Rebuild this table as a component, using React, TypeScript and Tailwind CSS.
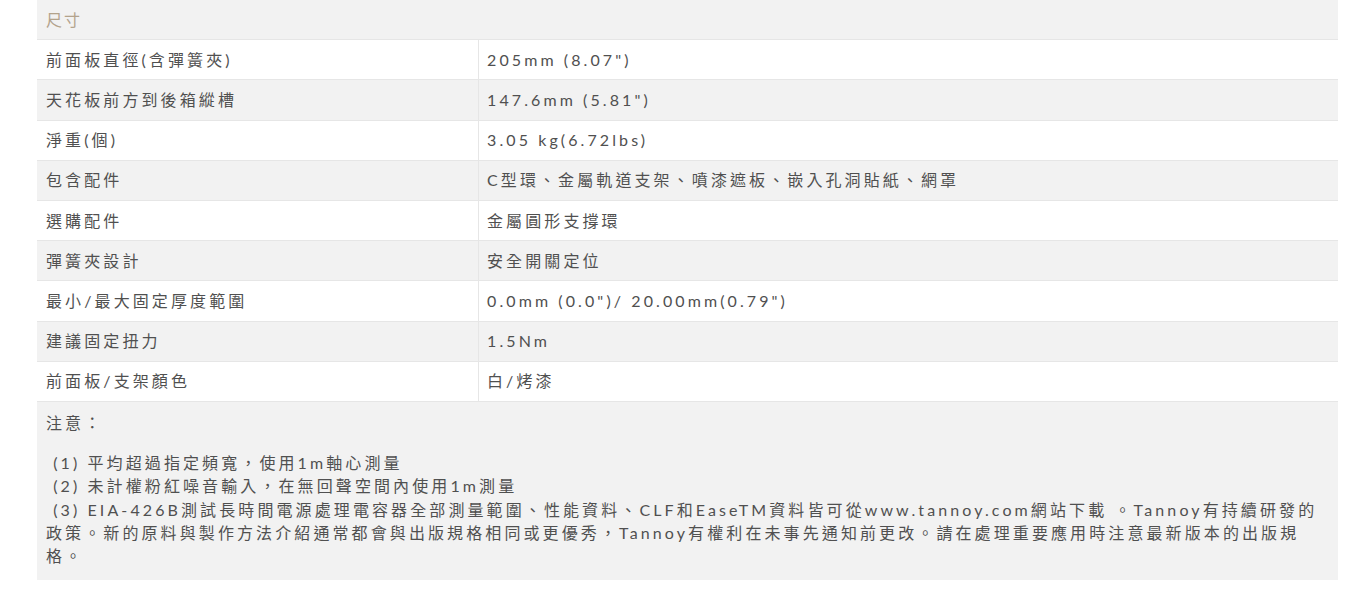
type Row = { label: string; value: string };

const ROWS: Row[] = [
  { label: "前面板直徑(含彈簧夾)", value: "205mm (8.07\")" },
  { label: "天花板前方到後箱縱槽", value: "147.6mm (5.81\")" },
  { label: "淨重(個)", value: "3.05 kg(6.72lbs)" },
  { label: "包含配件", value: "C型環、金屬軌道支架、噴漆遮板、嵌入孔洞貼紙、網罩" },
  { label: "選購配件", value: "金屬圓形支撐環" },
  { label: "彈簧夾設計", value: "安全開關定位" },
  { label: "最小/最大固定厚度範圍", value: "0.0mm (0.0\")/ 20.00mm(0.79\")" },
  { label: "建議固定扭力", value: "1.5Nm" },
  { label: "前面板/支架顏色", value: "白/烤漆" },
];

// 規格表：交錯底色的兩欄列，最後一列是整寬的注意事項
export default function App() {
  return (
    <div className="min-h-screen bg-white pl-[37px] pr-[24px] font-['Lato','Noto_Sans_CJK_TC',sans-serif] text-[#505050]">
      <div className="w-full">
        <div className="h-[40.2px] flex items-center px-[9px] bg-[#f2f2f2] border-b border-[#e6e6e6] text-[16px] tracking-[2px] text-[#b3a38c]">
          尺寸
        </div>
        {ROWS.map((row, i) => (
          <div
            key={row.label}
            className={`flex h-[40.2px] border-b border-[#e6e6e6] text-[16px] tracking-[3.1px] ${
              i % 2 === 0 ? "bg-white" : "bg-[#f2f2f2]"
            }`}
          >
            <div className="w-[442px] shrink-0 flex items-center px-[9px] border-r border-[#e6e6e6]">
              {row.label}
            </div>
            <div className="flex-1 flex items-center px-[8px]">{row.value}</div>
          </div>
        ))}
        <div className="bg-[#f2f2f2] px-[9px] pt-[9px] pb-[12px] text-[16px] leading-[23.3px] tracking-[3.1px]">
          <div>注意：</div>
          <div className="mt-[17px]">
            <div>&nbsp;(1) 平均超過指定頻寬，使用1m軸心測量</div>
            <div>&nbsp;(2) 未計權粉紅噪音輸入，在無回聲空間內使用1m測量</div>
            <div>
              &nbsp;(3) EIA-426B測試長時間電源處理電容器全部測量範圍、性能資料、CLF和EaseTM資料皆可從www.tannoy.com網站下載 。Tannoy有持續研發的政策。新的原料與製作方法介紹通常都會與出版規格相同或更優秀，Tannoy有權利在未事先通知前更改。請在處理重要應用時注意最新版本的出版規格。
            </div>
          </div>
        </div>
      </div>
    </div>
  );
}
